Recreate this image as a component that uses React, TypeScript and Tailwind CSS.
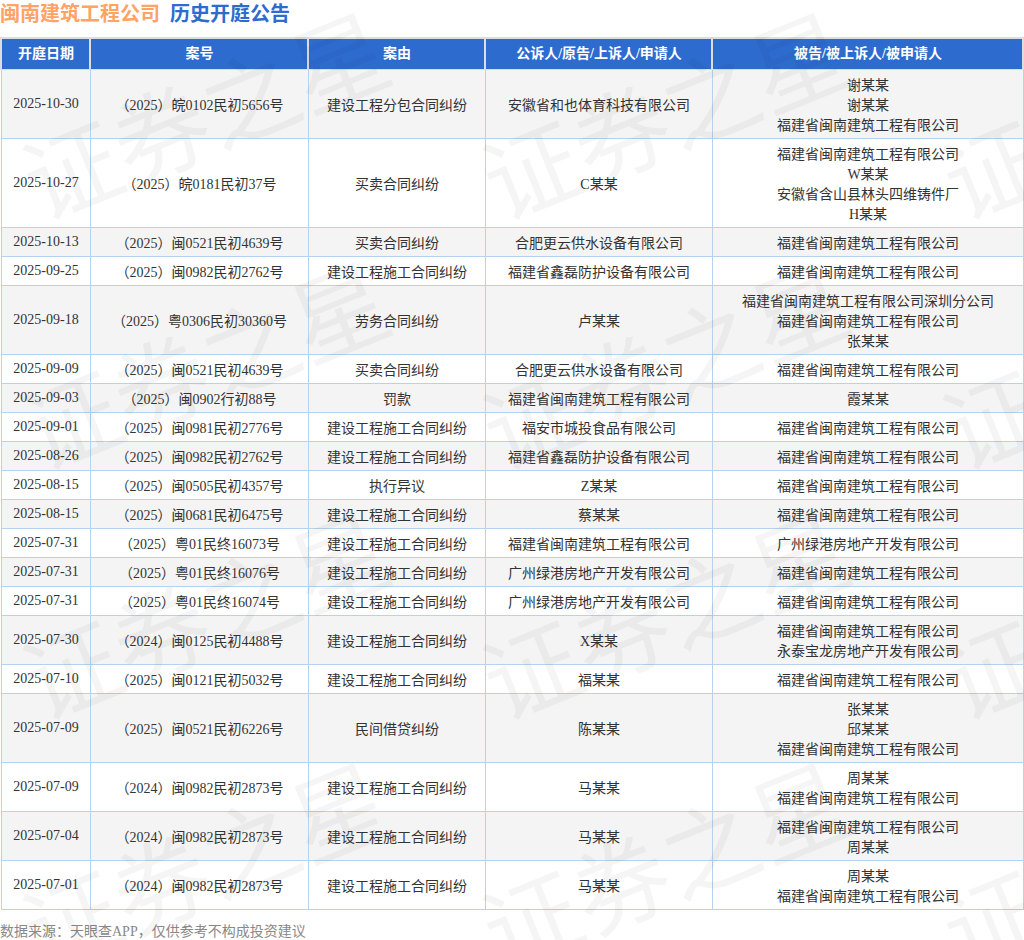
const rows: [string, string, string, string, string[]][] = [
  ['2025-10-30', '（2025）皖0102民初5656号', '建设工程分包合同纠纷', '安徽省和也体育科技有限公司', ['谢某某', '谢某某', '福建省闽南建筑工程有限公司']],
  ['2025-10-27', '（2025）皖0181民初37号', '买卖合同纠纷', 'C某某', ['福建省闽南建筑工程有限公司', 'W某某', '安徽省含山县林头四维铸件厂', 'H某某']],
  ['2025-10-13', '（2025）闽0521民初4639号', '买卖合同纠纷', '合肥更云供水设备有限公司', ['福建省闽南建筑工程有限公司']],
  ['2025-09-25', '（2025）闽0982民初2762号', '建设工程施工合同纠纷', '福建省鑫磊防护设备有限公司', ['福建省闽南建筑工程有限公司']],
  ['2025-09-18', '（2025）粤0306民初30360号', '劳务合同纠纷', '卢某某', ['福建省闽南建筑工程有限公司深圳分公司', '福建省闽南建筑工程有限公司', '张某某']],
  ['2025-09-09', '（2025）闽0521民初4639号', '买卖合同纠纷', '合肥更云供水设备有限公司', ['福建省闽南建筑工程有限公司']],
  ['2025-09-03', '（2025）闽0902行初88号', '罚款', '福建省闽南建筑工程有限公司', ['霞某某']],
  ['2025-09-01', '（2025）闽0981民初2776号', '建设工程施工合同纠纷', '福安市城投食品有限公司', ['福建省闽南建筑工程有限公司']],
  ['2025-08-26', '（2025）闽0982民初2762号', '建设工程施工合同纠纷', '福建省鑫磊防护设备有限公司', ['福建省闽南建筑工程有限公司']],
  ['2025-08-15', '（2025）闽0505民初4357号', '执行异议', 'Z某某', ['福建省闽南建筑工程有限公司']],
  ['2025-08-15', '（2025）闽0681民初6475号', '建设工程施工合同纠纷', '蔡某某', ['福建省闽南建筑工程有限公司']],
  ['2025-07-31', '（2025）粤01民终16073号', '建设工程施工合同纠纷', '福建省闽南建筑工程有限公司', ['广州绿港房地产开发有限公司']],
  ['2025-07-31', '（2025）粤01民终16076号', '建设工程施工合同纠纷', '广州绿港房地产开发有限公司', ['福建省闽南建筑工程有限公司']],
  ['2025-07-31', '（2025）粤01民终16074号', '建设工程施工合同纠纷', '广州绿港房地产开发有限公司', ['福建省闽南建筑工程有限公司']],
  ['2025-07-30', '（2024）闽0125民初4488号', '建设工程施工合同纠纷', 'X某某', ['福建省闽南建筑工程有限公司', '永泰宝龙房地产开发有限公司']],
  ['2025-07-10', '（2025）闽0121民初5032号', '建设工程施工合同纠纷', '福某某', ['福建省闽南建筑工程有限公司']],
  ['2025-07-09', '（2025）闽0521民初6226号', '民间借贷纠纷', '陈某某', ['张某某', '邱某某', '福建省闽南建筑工程有限公司']],
  ['2025-07-09', '（2024）闽0982民初2873号', '建设工程施工合同纠纷', '马某某', ['周某某', '福建省闽南建筑工程有限公司']],
  ['2025-07-04', '（2024）闽0982民初2873号', '建设工程施工合同纠纷', '马某某', ['福建省闽南建筑工程有限公司', '周某某']],
  ['2025-07-01', '（2024）闽0982民初2873号', '建设工程施工合同纠纷', '马某某', ['周某某', '福建省闽南建筑工程有限公司']],
];

const headers = ['开庭日期', '案号', '案由', '公诉人/原告/上诉人/申请人', '被告/被上诉人/被申请人'];
const widths = ['w-[89px]', 'w-[218px]', 'w-[177px]', 'w-[227px]', 'w-[311px]'];
const cell = 'border border-[#b5d3ec] pl-[5px] pr-1 pt-[6px] pb-[2px] text-center align-middle';

export default function App() {
  return (
    <div className="relative h-[940px] w-[1024px] overflow-hidden bg-white font-['Liberation_Serif','Noto_Sans_CJK_SC',serif] text-[14px] leading-[20px] text-[#333]">
      <div className="flex h-[37px] items-start gap-[10px] text-[20px] font-bold leading-[28px]">
        <span className="text-[#ffa366]">闽南建筑工程公司</span>
        <span className="text-[#2e6bcf]">历史开庭公告</span>
      </div>

      <table className="w-[1024px] table-fixed border-collapse">
        <thead>
          <tr className="h-[31px] bg-[#2e6bcf] text-white">
            {headers.map((h, i) => (
              <th
                key={h}
                className={`${widths[i]} border-x-2 border-t-2 border-b border-[#ddd] pl-[5px] pr-1 text-center text-[14px] font-bold`}
              >
                {h}
              </th>
            ))}
          </tr>
        </thead>
        <tbody>
          {rows.map((r, i) => (
            <tr key={i} className={i % 2 === 0 ? 'bg-[#f4f4f4]' : 'bg-white'}>
              <td className={cell}>
                <span className="relative top-[-2px]">{r[0]}</span>
              </td>
              <td className={cell}>{r[1]}</td>
              <td className={cell}>{r[2]}</td>
              <td className={cell}>{r[3]}</td>
              <td className={cell}>
                {r[4].map((p, j) => (
                  <div key={j}>{p}</div>
                ))}
              </td>
            </tr>
          ))}
        </tbody>
      </table>

      <div className="mt-[12px] text-[14px] leading-[20px] text-[#888]">数据来源：天眼查APP，仅供参考不构成投资建议</div>

      {/* watermark repeated over the whole page */}
      <div className="pointer-events-none absolute left-[-26px] top-[-13px] grid grid-cols-[repeat(3,460px)] auto-rows-[250px]">
        {Array.from({ length: 12 }).map((_, i) => (
          <div key={i} className="flex items-center justify-center">
            <div className="-rotate-[22deg] whitespace-nowrap font-['Noto_Sans_CJK_SC',sans-serif] text-[96px] leading-none text-black/[0.04]">
              证券之星
            </div>
          </div>
        ))}
      </div>
    </div>
  );
}
